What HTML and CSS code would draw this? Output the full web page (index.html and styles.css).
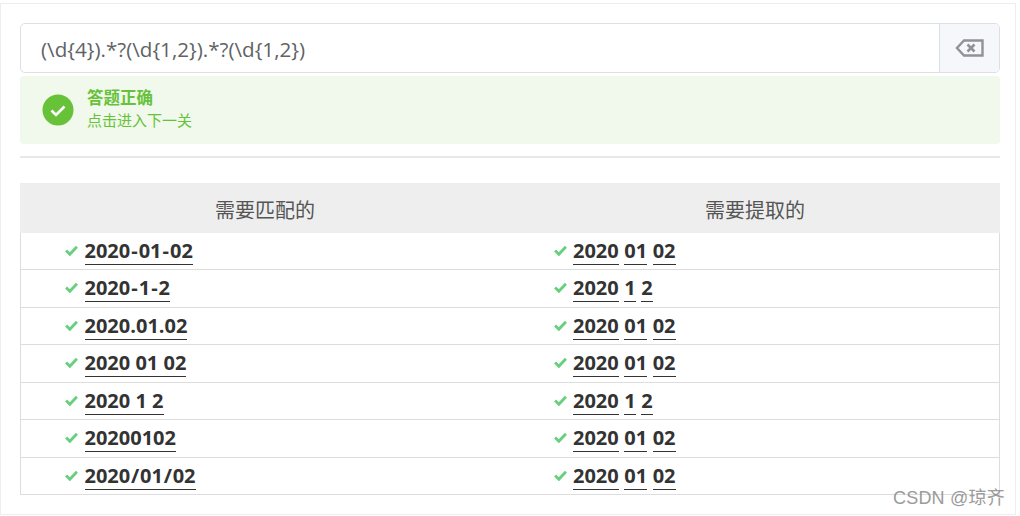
FILE: index.html
```html
<!DOCTYPE html>
<html lang="zh">
<head>
<meta charset="utf-8">
<title>答题正确</title>
<link rel="stylesheet" href="styles.css">
</head>
<body>
<main class="frame">
  <div class="input-group">
    <div class="input">(\d{4}).*?(\d{1,2}).*?(\d{1,2})</div>
    <button class="clear" type="button" aria-label="clear">
      <svg width="30" height="20" viewBox="0 0 30 20"><path d="M9 2.5H27.5V17.5H9L2 10Z" fill="none" stroke="#8f9296" stroke-width="2.4"/><path d="M12.5 6.5L19.5 13.5M19.5 6.5L12.5 13.5" fill="none" stroke="#8f9296" stroke-width="2.6"/></svg>
    </button>
  </div>
  <div class="alert">
    <svg class="alert-icon" width="32" height="32" viewBox="0 0 32 32"><circle cx="16" cy="16" r="15.5" fill="#67c23a"/><path d="M9.5 16.5L14 21L22.5 12.5" fill="none" stroke="#fff" stroke-width="2.6"/></svg>
    <div class="alert-text">
      <div class="alert-title">答题正确</div>
      <div class="alert-sub">点击进入下一关</div>
    </div>
  </div>
  <hr class="rule">
  <div class="table">
    <div class="head"><div>需要匹配的</div><div>需要提取的</div></div>
    <div class="row">
      <div class="cell"><svg class="tick" viewBox="0 0 12 10"><path d="M1 5L4.5 8.5L11 1.5"/></svg><u>2020<span class="sep">-</span>01<span class="sep">-</span>02</u></div>
      <div class="cell"><svg class="tick" viewBox="0 0 12 10"><path d="M1 5L4.5 8.5L11 1.5"/></svg><u>2020</u><u>01</u><u>02</u></div>
    </div>
    <div class="row">
      <div class="cell"><svg class="tick" viewBox="0 0 12 10"><path d="M1 5L4.5 8.5L11 1.5"/></svg><u>2020<span class="sep">-</span>1<span class="sep">-</span>2</u></div>
      <div class="cell"><svg class="tick" viewBox="0 0 12 10"><path d="M1 5L4.5 8.5L11 1.5"/></svg><u>2020</u><u>1</u><u>2</u></div>
    </div>
    <div class="row">
      <div class="cell"><svg class="tick" viewBox="0 0 12 10"><path d="M1 5L4.5 8.5L11 1.5"/></svg><u>2020.01.02</u></div>
      <div class="cell"><svg class="tick" viewBox="0 0 12 10"><path d="M1 5L4.5 8.5L11 1.5"/></svg><u>2020</u><u>01</u><u>02</u></div>
    </div>
    <div class="row">
      <div class="cell"><svg class="tick" viewBox="0 0 12 10"><path d="M1 5L4.5 8.5L11 1.5"/></svg><u>2020 01 02</u></div>
      <div class="cell"><svg class="tick" viewBox="0 0 12 10"><path d="M1 5L4.5 8.5L11 1.5"/></svg><u>2020</u><u>01</u><u>02</u></div>
    </div>
    <div class="row">
      <div class="cell"><svg class="tick" viewBox="0 0 12 10"><path d="M1 5L4.5 8.5L11 1.5"/></svg><u>2020 1 2</u></div>
      <div class="cell"><svg class="tick" viewBox="0 0 12 10"><path d="M1 5L4.5 8.5L11 1.5"/></svg><u>2020</u><u>1</u><u>2</u></div>
    </div>
    <div class="row">
      <div class="cell"><svg class="tick" viewBox="0 0 12 10"><path d="M1 5L4.5 8.5L11 1.5"/></svg><u>20200102</u></div>
      <div class="cell"><svg class="tick" viewBox="0 0 12 10"><path d="M1 5L4.5 8.5L11 1.5"/></svg><u>2020</u><u>01</u><u>02</u></div>
    </div>
    <div class="row">
      <div class="cell"><svg class="tick" viewBox="0 0 12 10"><path d="M1 5L4.5 8.5L11 1.5"/></svg><u>2020<span class="slash">/</span>01<span class="slash">/</span>02</u></div>
      <div class="cell"><svg class="tick" viewBox="0 0 12 10"><path d="M1 5L4.5 8.5L11 1.5"/></svg><u>2020</u><u>01</u><u>02</u></div>
    </div>
  </div>
</main>
<div class="watermark">CSDN @琼齐</div>
</body>
</html>
```
FILE: styles.css
```css
* { box-sizing: border-box; }
html, body { margin: 0; padding: 0; background: #fff; }
body {
  width: 1020px;
  height: 516px;
  overflow: hidden;
  position: relative;
  font-family: "Open Sans", "Noto Sans CJK SC", sans-serif;
}
.frame {
  width: 1016px;
  height: 512px;
  margin-top: 3px;
  border: 1px solid #eeeeee;
  padding: 19px 15px 0 19px;
}
.input-group {
  display: flex;
  height: 50px;
  border: 1px solid #dcdfe6;
  border-radius: 5px;
  overflow: hidden;
}
.input {
  flex: 1;
  padding-left: 20px;
  font-size: 20.6px;
  line-height: 50px;
  color: #606266;
}
.clear {
  width: 60px;
  padding: 0;
  border: 0;
  border-left: 1px solid #dcdfe6;
  background: #f5f7fa;
  display: flex;
  align-items: center;
  justify-content: center;
}
.alert {
  display: flex;
  align-items: center;
  height: 68px;
  margin-top: 3px;
  padding-left: 22px;
  background: #f0f9eb;
  border-radius: 4px;
}
.alert-icon { flex: none; }
.alert-text { margin-left: 13px; margin-top: -3px; color: #67c23a; }
.alert-title { font-size: 16.5px; line-height: 22px; font-weight: 700; }
.alert-sub { font-size: 15px; line-height: 22px; }
.rule {
  height: 2px;
  margin: 12px 0 25px;
  border: 0;
  background: #e8e8e8;
}
.table {
  border: 1px solid #dddddd;
  border-top: 0;
}
.head {
  display: grid;
  grid-template-columns: 1fr 1fr;
  height: 50px;
  margin: 0 -1px;
  background: #eeeeee;
  color: #555555;
  font-size: 20px;
  line-height: 56px;
  text-align: center;
}
.row {
  display: grid;
  grid-template-columns: 1fr 1fr;
  height: 37.45px;
  border-bottom: 1px solid #dddddd;
}
.row:last-child { border-bottom: 0; height: 36.45px; }
.cell {
  display: flex;
  align-items: center;
  gap: 5.5px;
  padding: 0.5px 0 0 44px;
  color: #333333;
  font-size: 20px;
  font-weight: 700;
}
.cell + .cell { padding-left: 43.5px; }
.tick {
  width: 13px;
  height: 11px;
  margin: -2px 1px 0 0;
  fill: none;
  stroke: #67cf7e;
  stroke-width: 2.6;
  flex: none;
}
.sep { padding: 0 1px; }
.slash { padding: 0 0.75px; }
u {
  text-decoration: none;
  line-height: 26px;
  border-bottom: 1px solid #333333;
}
.watermark {
  position: absolute;
  left: 893px;
  top: 486px;
  color: #8a8a8a;
  font-family: "Liberation Sans", "Noto Sans CJK SC", sans-serif;
  font-size: 18px;
  line-height: 24px;
  letter-spacing: 0.2px;
  opacity: .85;
}
```
